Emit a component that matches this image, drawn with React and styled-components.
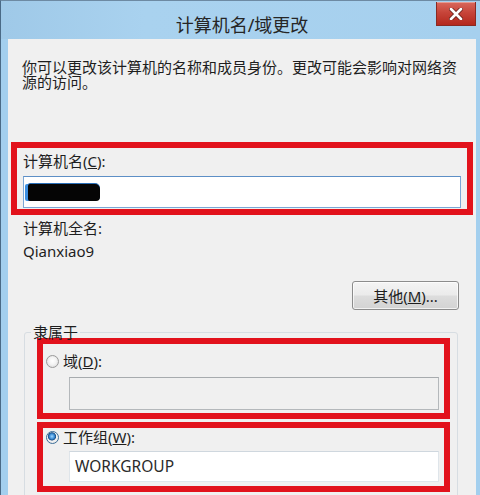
import React from 'react'
import styled, { createGlobalStyle } from 'styled-components';

const GlobalStyle = createGlobalStyle`
  html, body {
    margin: 0;
    padding: 0;
    background: #ffffff;
  }
  body {
    font-family: "Noto Sans", "Noto Sans CJK SC", sans-serif;
  }
`;

function Radio({ checked }) {
    return <RadioDot checked={checked} />
}

function App() {
    return (
        <>
            <GlobalStyle />
            <WindowFrame>
                <TitleBar>
                    <span />
                    <Title>计算机名/域更改</Title>
                    <CloseButton aria-label="关闭">
                        <svg width="14" height="12" viewBox="0 0 14 12">
                            <path d="M2 1 L12 11 M12 1 L2 11" stroke="#5a1510" strokeWidth="4.2" strokeLinecap="round" />
                            <path d="M2 1 L12 11 M12 1 L2 11" stroke="#ffffff" strokeWidth="2.8" strokeLinecap="round" />
                        </svg>
                    </CloseButton>
                </TitleBar>
                <Content>
                    <Intro>你可以更改该计算机的名称和成员身份。更改可能会影响对网络资源的访问。</Intro>

                    <Highlight $margin="52px 3px 0 3px" $padding="6px 6px 1px 6px">
                        <FieldLabel>计算机名(<u>C</u>):</FieldLabel>
                        <TextBox $focused $gap="7px" $height="32px">
                            <Redacted />
                        </TextBox>
                    </Highlight>

                    <InfoBlock>
                        <FieldLabel>计算机全名:</FieldLabel>
                        <FieldLabel>Qianxiao9</FieldLabel>
                    </InfoBlock>

                    <ButtonRow>
                        <PushButton>其他(<u>M</u>)...</PushButton>
                    </ButtonRow>

                    <GroupBox>
                        <legend>隶属于</legend>
                        <Highlight $margin="0" $padding="10px 5px 3px 3px">
                            <RadioRow>
                                <Radio />
                                <span>域(<u>D</u>):</span>
                            </RadioRow>
                            <TextBox $disabled $gap="8px" $height="33px" $indent="23px" />
                        </Highlight>
                        <Highlight $margin="3px 0 0 0" $padding="2px 5px 4px 3px">
                            <RadioRow>
                                <Radio checked />
                                <span>工作组(<u>W</u>):</span>
                            </RadioRow>
                            <TextBox $gap="6px" $height="31px" $indent="23px" $size="15.5px">WORKGROUP</TextBox>
                        </Highlight>
                    </GroupBox>
                </Content>
            </WindowFrame>
        </>
    )
}

const WindowFrame = styled.div`
  width: 480px;
  height: 495px;
  box-sizing: border-box;
  overflow: hidden;
  display: flex;
  flex-direction: column;
  background: #a3cfee;
  border-left: 1px solid #4a6a86;
  border-top: 1px solid #6d8aa3;
  padding: 0 4px 0 7px;
`;

const TitleBar = styled.div`
  height: 38px;
  flex-shrink: 0;
  display: grid;
  grid-template-columns: 1fr auto 1fr;
  align-items: start;
  margin: 0 -4px 0 -7px;
  padding: 0 4px 0 7px;
  background: linear-gradient(90deg, #9fc9e8 0%, #a9d2ef 30%, #a6d0ee 100%);
`;

const Title = styled.div`
  font-size: 18px;
  line-height: 22px;
  color: #262626;
  padding-top: 13px;
  white-space: nowrap;
`;

const CloseButton = styled.button`
  justify-self: end;
  width: 40px;
  height: 24px;
  margin-top: 1px;
  padding: 0;
  display: flex;
  align-items: center;
  justify-content: center;
  border: 1px solid #8a2a22;
  border-top: none;
  background: linear-gradient(180deg, #d9685c 0%, #c7453a 45%, #b4281d 100%);
  box-shadow: inset 0 1px 0 rgba(255, 255, 255, 0.35);
`;

const Content = styled.div`
  flex: 1;
  background: #f0f0f0;
  display: flex;
  flex-direction: column;
  font-size: 15px;
  line-height: 15px;
  color: #1e1e1e;
`;

const Intro = styled.p`
  margin: 21px 12px 0 14px;
  line-height: 15px;
`;

const Highlight = styled.div`
  margin: ${p => p.$margin};
  padding: ${p => p.$padding};
  border: 6px solid #e2121c;
  display: flex;
  flex-direction: column;
`;

const FieldLabel = styled.div`
  line-height: 15px;
  white-space: nowrap;
`;

const TextBox = styled.div`
  box-sizing: border-box;
  height: ${p => p.$height};
  margin-top: ${p => p.$gap};
  margin-left: ${p => p.$indent || '0'};
  display: flex;
  align-items: center;
  padding: 0 5px;
  font-size: ${p => p.$size || '15px'};
  color: #2b2b2b;
  background: ${p => (p.$disabled ? '#f0f0f0' : '#ffffff')};
  border: 1px solid ${p => (p.$focused ? '#7aa7d6' : p.$disabled ? '#b4b8bb' : '#dfe5ea')};
  border-top-color: ${p => (p.$focused ? '#5d8fc6' : p.$disabled ? '#a7abae' : '#cfd7de')};
`;

const Redacted = styled.span`
  width: 72px;
  height: 17px;
  margin-left: -1px;
  background: #050505;
  border-radius: 2px 5px 4px 2px;
  box-shadow: -3px 0 0 #3d8fe0, 0 -1px 0 #2a6fb8;
`;

const InfoBlock = styled.div`
  margin: 6px 0 0 15px;
  display: flex;
  flex-direction: column;
  gap: 8px;
`;

const ButtonRow = styled.div`
  display: flex;
  justify-content: flex-end;
  margin: 22px 17px 0 0;
`;

const PushButton = styled.button`
  width: 107px;
  height: 29px;
  font-family: inherit;
  font-size: 15px;
  color: #1e1e1e;
  border: 1px solid #8c8c8c;
  border-radius: 3px;
  background: linear-gradient(180deg, #f4f4f4 0%, #ebebeb 48%, #dddddd 52%, #d3d3d3 100%);
  box-shadow: inset 0 0 0 1px rgba(255, 255, 255, 0.7);
  padding: 0;
`;

const GroupBox = styled.fieldset`
  margin: 16px 18px 0 16px;
  padding: 0 7px 10px 12px;
  border: 1px solid #d7dde2;
  border-radius: 3px;
  min-width: 0;

  legend {
    margin-left: -6px;
    padding: 0 2px;
    line-height: 12px;
    font-size: 15px;
  }
`;

const RadioRow = styled.div`
  display: flex;
  align-items: center;
  gap: 4px;
  line-height: 15px;
`;

const RadioDot = styled.span`
  width: 13px;
  height: 13px;
  box-sizing: border-box;
  border-radius: 50%;
  border: 1px solid ${p => (p.checked ? '#3c6e98' : '#9a9a9a')};
  background: ${p => (p.checked
        ? 'radial-gradient(circle at 45% 40%, #9fd6ff 0%, #3a8bd4 28%, #1b4f86 42%, #f4f4f4 50%, #dcdcdc 100%)'
        : 'radial-gradient(circle at 50% 45%, #ffffff 0%, #f3f3f3 45%, #d2d2d2 100%)')};
`;

export default App
